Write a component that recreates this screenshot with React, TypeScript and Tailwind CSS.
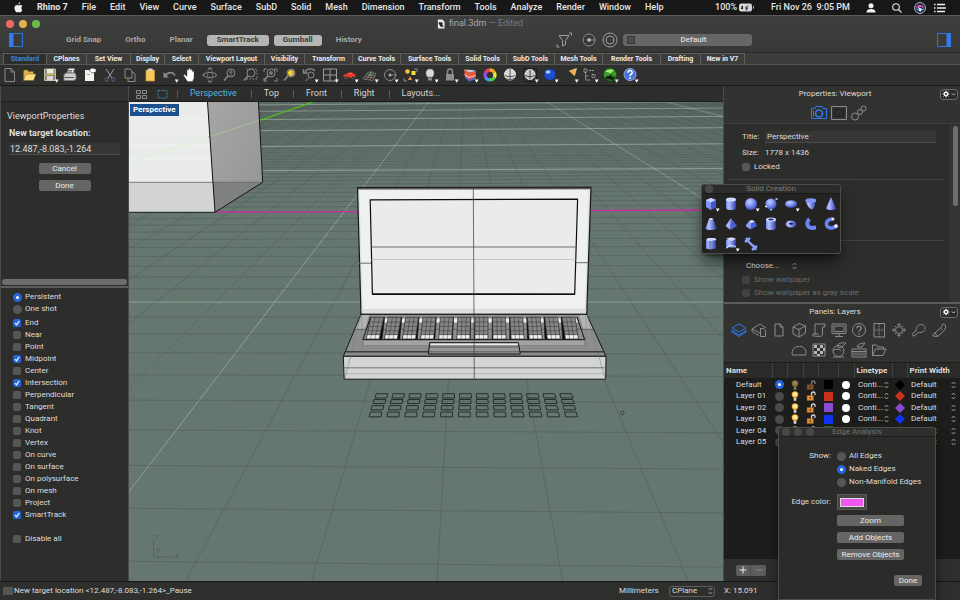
import React from "react";
import { clsx } from "clsx";

type CellProps = { children?: React.ReactNode; className?: string };

const Cell: React.FC<CellProps> = ({ children, className }) => (
  <svg viewBox="0 0 20 20" className={clsx("h-5 w-5 shrink-0", className)} fill="none" stroke="#8b8b8b" strokeWidth="1" aria-hidden="true">
    {children}
  </svg>
);

const Drop = () => <path d="M14.8 14.5h3.8l-1.900 3.200z" fill="#fff" stroke="none" />;

const Lens = () => (
  <>
    <circle cx="11" cy="8" r="4" />
    <path d="M8 11l-4 4.500" strokeWidth="1.600" />
  </>
);

const toolIcons: { name: string; art: React.ReactNode }[] = [
  { name: "New", art: <path d="M5 3.500h6l3.500 3.500v9.500H5zM11 3.500V7h3.500" /> },
  {
    name: "Open",
    art: (
      <g stroke="#7d5f1a" strokeWidth=".5">
        <path d="M3.500 15V6.500l1-1.500h3l1 1.500h5V9" fill="#e2b24c" />
        <path d="M3.500 15.500L6 9h10l-2.500 6.500z" fill="#ffdf86" />
      </g>
    ),
  },
  {
    name: "Save",
    art: (
      <>
        <path d="M4.500 4h11v11.500h-11z" fill="#8d8d7d" stroke="#b9b9a8" />
        <path d="M7 4h6.500v4.500H7z" fill="#ecebd9" stroke="none" />
        <path d="M7 11h6v4.500H7z" fill="#d9d9d9" stroke="none" />
        <path d="M5 9.500h10" stroke="#c8b63f" />
        <Drop />
      </>
    ),
  },
  {
    name: "Print",
    art: (
      <>
        <path d="M7 9l1.500-5.500h6L13 9z" fill="#fff" stroke="#888" />
        <path d="M4 9.500l2-1.500h9l1 2v4l-2 1.500H4z" fill="#cfcfcf" stroke="#777" />
        <path d="M5 12.500h9M8.500 5.500h4M8 7h4" stroke="#333" strokeWidth=".8" />
      </>
    ),
  },
  {
    name: "Notes",
    art: (
      <>
        <path d="M5 5h9v11H5z" fill="#f3f3ee" stroke="none" />
        <path d="M9 5l3-2 4 1v3l-4 1z" fill="#fff" stroke="#333" strokeWidth=".6" />
        <path d="M7 9.500h3" stroke="#888" strokeWidth=".7" />
      </>
    ),
  },
  {
    name: "Cut",
    art: (
      <>
        <path d="M6 4l6 9M14 4l-6 9" stroke="#9ba0a8" />
        <circle cx="6.700" cy="14.500" r="1.700" stroke="#54658f" />
        <circle cx="13.300" cy="14.500" r="1.700" stroke="#54658f" />
      </>
    ),
  },
  { name: "Copy", art: <path d="M5 4h5l2 2v7H5zM8 13v3.500h7V9l-2-2h-1" /> },
  {
    name: "Paste",
    art: (
      <>
        <path d="M6 5h8.500v11H6z" fill="#f5c75d" stroke="#d09b34" strokeWidth=".7" />
        <path d="M8 3.500h4.500V6H8z" fill="#d8d8d8" stroke="none" />
      </>
    ),
  },
  {
    name: "Undo",
    art: (
      <>
        <path d="M5 11c2-4 8-5 10-.5" strokeWidth="1.800" />
        <path d="M3.500 7v5.500h5.500z" fill="#8b8b8b" stroke="none" />
        <Drop />
      </>
    ),
  },
  {
    name: "Pan",
    art: (
      <path
        d="M7.500 16.500L3.800 10.800c-.5-1.200.9-1.700 1.700-.7L7 11.500V5.500c0-1.200 1.600-1.200 1.700 0V4.300c.1-1.300 1.700-1.300 1.800 0v.9c.2-1.200 1.700-1.100 1.800.1v1.400c.3-1 1.700-.9 1.700.3V13l-1.500 3.500z"
        fill="#fff"
        stroke="#444"
        strokeWidth=".4"
      />
    ),
  },
  {
    name: "Rotate view",
    art: (
      <>
        <ellipse cx="10" cy="10" rx="6.500" ry="2.500" />
        <ellipse cx="10" cy="10" rx="2.500" ry="6.500" stroke="#666" />
        <path d="M8 4l2-1.500L12 4M8 16l2 1.500 2-1.500M4 8.500L2.500 11" />
      </>
    ),
  },
  { name: "Zoom dynamic", art: <><Lens /><path d="M9 7h4M11 5v4M9.500 10h3" strokeWidth=".8" /></> },
  { name: "Zoom window", art: <><path d="M6 4h11v10H6" strokeDasharray="1.500 1.500" /><Lens /></> },
  { name: "Zoom extents", art: <><path d="M4 7V4h3M14 4h3v3M17 13v3h-3M7 16H4v-3" /><Lens /><circle cx="11" cy="8" r="2" fill="#777" stroke="none" /></> },
  { name: "Zoom selected", art: <><Lens /><circle cx="11" cy="8" r="3" fill="#f5d83d" stroke="none" /><path d="M11 5l3 3-2 2z" fill="#e9953a" stroke="none" /></> },
  { name: "Undo view", art: <><path d="M5 7c2-4 8-4 10-1M3.500 4v4h4" strokeWidth="1.300" /><circle cx="11" cy="10" r="3" /><path d="M9 12.500L5.500 16" /><Drop /></> },
  { name: "Viewports", art: <><path d="M3.500 4h13v12h-13zM10 4v12M3.500 10h13" stroke="#9b9b9b" /><Drop /></> },
  {
    name: "Car",
    art: (
      <>
        <path d="M3 11.500c0-2 2-2.500 4-2.700C8.500 7 12 6.500 13.500 8.500c2 .3 2.500 1.500 2 3.300l-4 1.200z" fill="#e23b2c" stroke="#8e1e15" strokeWidth=".5" />
        <path d="M8 8.800c1.500-1 3-1 4-.2z" fill="#f7c9c3" stroke="none" />
        <circle cx="6" cy="12.500" r="1.200" fill="#222" stroke="#999" strokeWidth=".4" />
        <circle cx="13" cy="12.500" r="1.200" fill="#222" stroke="#999" strokeWidth=".4" />
        <Drop />
      </>
    ),
  },
  {
    name: "Construction plane",
    art: (
      <>
        <path d="M3 14L8 7l8 1.500-3 7zM5 11.500l9 1.500M6.500 9.300l8.700 1.500M6 14.500L10.500 7.500M9.500 15L13.500 8" strokeWidth=".7" />
        <path d="M10 11l-3.500 2" stroke="#d44" />
        <path d="M10 11l1.500-5" stroke="#5b5" />
        <Drop />
      </>
    ),
  },
  { name: "Set view", art: <><circle cx="10" cy="10" r="5.500" /><path d="M10 10h7" strokeWidth=".8" /><circle cx="10" cy="10" r="1.500" fill="#aaa" stroke="none" /><Drop /></> },
  {
    name: "Object properties",
    art: (
      <>
        <path d="M4 13v3h3M14 4h3v3" />
        <circle cx="7.500" cy="6.500" r="2.300" fill="#f3c43a" stroke="none" />
        <path d="M11.500 6h4v4h-4z" fill="#f3e13a" stroke="none" />
        <path d="M8 15l2-4 2 4z" fill="#f09a3a" stroke="none" />
        <Drop />
      </>
    ),
  },
  {
    name: "Hide",
    art: (
      <>
        <path d="M7.500 12C5 9 5.500 4 10 4s5 5 2.500 8z" fill="#d9d9d9" stroke="#888" strokeWidth=".5" />
        <path d="M8 12.500h4v3H8z" fill="#8a8a8a" stroke="none" />
        <Drop />
      </>
    ),
  },
  { name: "Lock", art: <><path d="M7.500 9V6.500c0-3.300 5-3.300 5 0V9" strokeWidth="1.500" /><path d="M6 9h8v6.500H6z" fill="#8e8e8e" stroke="none" /><Drop /></> },
  {
    name: "Layers",
    art: (
      <>
        <path d="M4 4.500l5 3 7-1.500-.5 8-6.500 2-4-4z" fill="#e9563b" stroke="none" />
        <path d="M4 4.500l5 3 7-1.500-3-1z" fill="#c9cdd9" stroke="none" />
        <path d="M4.500 9.500l4.500 3 6.500-2" stroke="#fff" strokeWidth=".8" />
        <path d="M5 12l4 3.500 6.500-2" stroke="#3a68d8" strokeWidth="1.600" />
        <Drop />
      </>
    ),
  },
  {
    name: "Colors",
    art: (
      <g strokeWidth="3.300">
        <path d="M10 5a5 5 0 0 1 4.300 2.500" stroke="#f5a623" />
        <path d="M14.300 7.500a5 5 0 0 1 0 5" stroke="#f3e33a" />
        <path d="M14.300 12.500A5 5 0 0 1 10 15" stroke="#52c84a" />
        <path d="M10 15a5 5 0 0 1-4.300-2.500" stroke="#3f9bf0" />
        <path d="M5.700 12.500a5 5 0 0 1 0-5" stroke="#9a4ae0" />
        <path d="M5.700 7.500A5 5 0 0 1 10 5" stroke="#ee3f66" />
      </g>
    ),
  },
  { name: "Shade", art: <><circle cx="10" cy="9.500" r="5.500" fill="#d8d8d8" stroke="#eee" /><path d="M4.500 10.500c3 1.500 8 1.500 11 0M10 4v11M6 13.500c2 1.500 6 1.500 8 0" stroke="#555" /></> },
  {
    name: "Shade selected",
    art: (
      <>
        <path d="M3.500 3.500h13v13h-13z" stroke="#111" strokeDasharray="1 1" />
        <circle cx="10" cy="9.500" r="5" fill="#c8c8c8" stroke="#eee" />
        <path d="M5 10.500c3 1.500 7 1.500 10 0M10 4.500v10" stroke="#444" />
        <Drop />
      </>
    ),
  },
  { name: "Render", art: <><circle cx="10" cy="9.500" r="5.700" fill="#1c4fd0" stroke="#0d2a7c" strokeWidth=".5" /><ellipse cx="8" cy="7" rx="2.500" ry="1.800" fill="#a9c4ff" stroke="none" /><Drop /></> },
  { name: "Spotlight", art: <><path d="M9.500 6l7-2.500-2 7z" fill="#f4a83c" stroke="#fbe2a2" strokeWidth=".7" /><Drop /></> },
  { name: "Options", art: <><path d="M4 4h3v3H4zM9 5.500h5M5.500 7v8H10M5.500 11H9M12 9.500h3v3h-3z" strokeDasharray="2 .7" stroke="#a5a5a5" /><Drop /></> },
  {
    name: "Grasshopper",
    art: (
      <>
        <circle cx="10" cy="9.500" r="6.500" fill="#3d9a2c" stroke="#1e5516" />
        <path d="M5 7c3-3 7-3 9-1-2 0-3 1-3 3-2-2-4-2-6-2z" fill="#a4f07a" stroke="none" />
        <path d="M5 14c1-3 3-4 5-3l1-3 1 4 3-1-2 4z" fill="#10200c" stroke="none" />
        <Drop />
      </>
    ),
  },
  {
    name: "Help",
    art: (
      <>
        <circle cx="10" cy="9.500" r="6" fill="#4a74dc" stroke="#89a6ee" />
        <path d="M8 7.800c0-3 4.200-2.800 4.200-.3 0 1.700-2.100 1.700-2.100 3.500" stroke="#fff" strokeWidth="1.500" />
        <circle cx="10" cy="13" r=".9" fill="#fff" stroke="none" />
        <Drop />
      </>
    ),
  },
];

const menus = ["File", "Edit", "View", "Curve", "Surface", "SubD", "Solid", "Mesh", "Dimension", "Transform", "Tools", "Analyze", "Render", "Window", "Help"];

const toolTabs = [
  { label: "Standard", width: "w-11" },
  { label: "CPlanes", width: "w-10" },
  { label: "Set View", width: "w-11" },
  { label: "Display", width: "w-[34px]" },
  { label: "Select", width: "w-[34px]" },
  { label: "Viewport Layout", width: "w-[66px]" },
  { label: "Visibility", width: "w-10" },
  { label: "Transform", width: "w-12" },
  { label: "Curve Tools", width: "w-12" },
  { label: "Surface Tools", width: "w-[58px]" },
  { label: "Solid Tools", width: "w-12" },
  { label: "SubD Tools", width: "w-12" },
  { label: "Mesh Tools", width: "w-12" },
  { label: "Render Tools", width: "w-[58px]" },
  { label: "Drafting", width: "w-10" },
  { label: "New in V7", width: "w-11" },
];

const snaps = ["End", "Near", "Point", "Midpoint", "Center", "Intersection", "Perpendicular", "Tangent", "Quadrant", "Knot", "Vertex", "On curve", "On surface", "On polysurface", "On mesh", "Project", "SmartTrack"];
const activeSnaps = ["End", "Midpoint", "Intersection", "SmartTrack"];

const layers = [
  { name: "Default", color: "#000000" },
  { name: "Layer 01", color: "#c8321c" },
  { name: "Layer 02", color: "#8a4bd0" },
  { name: "Layer 03", color: "#1034f0" },
  { name: "Layer 04", color: "#2c6b1f" },
  { name: "Layer 05", color: "#2c6b1f" },
];

type OptionProps = { label: string; on?: boolean; disabled?: boolean; className?: string };

const CheckOption: React.FC<OptionProps> = ({ label, on, disabled, className }) => (
  <label className={clsx("flex h-3 items-center gap-1 whitespace-nowrap", disabled && "text-[#6b6b69]", className)}>
    <span className="relative h-2 w-2">
      <input
        type="checkbox"
        defaultChecked={on}
        disabled={disabled}
        className="peer block h-2 w-2 appearance-none rounded-[2px] bg-[#565655] checked:bg-[#2465dd] disabled:bg-[#414140]"
      />
      <svg viewBox="0 0 8 8" className="pointer-events-none absolute inset-0 hidden h-2 w-2 peer-checked:block" fill="none" stroke="#fff" strokeWidth="1.200">
        <path d="M2 4.200l1.500 1.600L6.200 2" />
      </svg>
    </span>
    {label}
  </label>
);

const RadioOption: React.FC<OptionProps & { group: string }> = ({ label, on, group, className }) => (
  <label className={clsx("flex h-3 items-center gap-[3px] whitespace-nowrap", className)}>
    <input type="radio" name={group} defaultChecked={on} className="h-[9px] w-[9px] appearance-none rounded-full bg-[#565655] checked:border-[3px] checked:border-[#2465dd] checked:bg-white" />
    {label}
  </label>
);

const PushButton: React.FC<{ children: React.ReactNode; className?: string }> = ({ children, className }) => (
  <button className={clsx("flex h-[11px] items-center justify-center rounded-[2px] bg-[#656564] leading-none text-[#ececec]", className)}>{children}</button>
);

const Steppers = () => (
  <svg viewBox="0 0 5 8" className="pointer-events-none h-2 w-[5px] shrink-0" fill="none" stroke="#a5a5a5" strokeWidth=".9">
    <path d="M.7 3l1.800-2 1.800 2M.7 5l1.800 2 1.800-2" />
  </svg>
);

const GearButton = () => (
  <button aria-label="Panel options" className="flex h-[11px] w-[18px] items-center justify-center gap-px rounded-[3px] border border-[#6a6a69] bg-[#2b2b2a]">
    <svg viewBox="0 0 8 8" className="h-2 w-2" stroke="#f0f0f0" fill="none">
      <circle cx="4" cy="4" r="1.700" strokeWidth="1.500" />
      <path d="M4 .6v1.400M4 6v1.400M.6 4H2M6 4h1.400M1.600 1.600l1 1M5.400 5.400l1 1M6.400 1.600l-1 1M2.600 5.400l-1 1" strokeWidth="1" />
    </svg>
    <svg viewBox="0 0 5 8" className="h-2 w-[5px]" stroke="#d0d0d0" fill="none">
      <path d="M1 3.500l1.500 1.500L4 3.500" />
    </svg>
  </button>
);

const MenuBar = () => (
  <header className="flex h-[15px] shrink-0 items-center bg-[#171717] px-3.5 text-[9px] font-medium text-[#e6e6e6]">
    <svg viewBox="0 0 12 14" className="h-[11px] w-[9px] shrink-0" fill="#f2f2f2">
      <path d="M8.300 0c.1 1.500-1.100 2.800-2.500 2.900C5.600 1.500 6.900.2 8.300 0zM11 10.300C10.300 12 9.200 13.500 8.200 13.500c-.8 0-1.200-.5-2.100-.5s-1.400.5-2.100.5C2.500 13.500.6 10.600.6 7.800.6 5.300 2.200 3.700 4 3.700c.9 0 1.600.5 2.200.5.600 0 1.500-.6 2.600-.6 1 0 1.900.5 2.400 1.300-2 1.200-1.700 4.300-.2 5.400z" />
    </svg>
    <nav className="ml-3.5 flex gap-3.5 whitespace-nowrap">
      <button className="font-bold">Rhino 7</button>
      {menus.map((menu) => (
        <button key={menu}>{menu}</button>
      ))}
    </nav>
    <div className="ml-auto flex items-center whitespace-nowrap">
      <span>100%</span>
      <svg viewBox="0 0 16 9" className="ml-0.5 h-[9px] w-4" fill="#d5d5d5">
        <rect x="0" y=".5" width="13" height="8" rx="2" />
        <path d="M14 3v3c1.300-.3 1.300-2.700 0-3z" />
        <path d="M3.500 3v3M2 4h2M2 5.500h2M9 3l-2.500 2h2L7 7.500" stroke="#171717" fill="none" strokeWidth="1" />
      </svg>
      <time className="ml-4 whitespace-pre">Fri Nov 26  9:05 PM</time>
      <svg viewBox="0 0 10 10" className="ml-4 h-2.5 w-2.5" fill="#f0f0f0">
        <circle cx="5" cy="2.800" r="2.500" />
        <path d="M.5 9.500C.5 6.500 3 6 5 6s4.500.5 4.500 3.500z" />
      </svg>
      <svg viewBox="0 0 10 10" className="ml-4 h-2.5 w-2.5" fill="none" stroke="#e6e6e6" strokeWidth="1.100">
        <circle cx="4" cy="4" r="3.300" />
        <path d="M6.500 6.500l3 3" />
      </svg>
      <svg viewBox="0 0 12 12" className="ml-3 h-3 w-3">
        <circle cx="6" cy="6" r="5.500" fill="#2b2b52" stroke="#c9cde0" strokeWidth=".8" />
        <path d="M1.500 6c2-4 7-4 9 0-3-1.500-6-1.500-9 0z" fill="#e05aa0" />
        <path d="M1.500 6c2 4 7 4 9 0-3 2-6 2-9 0z" fill="#41b8e8" />
        <path d="M4 5l4 2-2 3z" fill="#fff" />
      </svg>
      <svg viewBox="0 0 12 10" className="ml-2 h-2.5 w-3" stroke="#f0f0f0" strokeWidth="1.400">
        <path d="M0 1.500h1.500M3 1.500h8M0 5h1.500M3 5h9M0 8.500h1.500M3 8.500h8" />
      </svg>
    </div>
  </header>
);

const SidebarIcon: React.FC<{ flip?: boolean }> = ({ flip }) => (
  <svg viewBox="0 0 14 14" className={clsx("h-3.5 w-3.5 shrink-0", flip && "rotate-180")} fill="none" stroke="#2f76e8">
    <path d="M.5 .5h13v13H.5z" />
    <path d="M0 0h4.500v14H0z" fill="#3478f0" stroke="none" />
  </svg>
);

const TitleBar = () => (
  <div className="shrink-0 border-t border-[#5a5a59] bg-linear-to-b from-[#404040] to-[#373736]">
    <div className="relative flex h-[15px] items-center gap-[5px] px-1.5">
      <button aria-label="Close" className="h-2 w-2 rounded-full bg-[#ee6a5f]" />
      <button aria-label="Minimise" className="h-2 w-2 rounded-full bg-[#e0b44b]" />
      <button aria-label="Full screen" className="h-2 w-2 rounded-full bg-[#6cbb4a]" />
      <h1 className="pointer-events-none absolute inset-x-0 flex items-center justify-center gap-1 text-[9px] text-[#a9a9a8]">
        <svg viewBox="0 0 9 10" className="h-2.5 w-2">
          <path d="M1 0h5l2.500 2.500V10H1z" fill="#e8e8e8" />
          <path d="M1.500 4c1-2 3 0 5-1l-.5 3 2 2H4L3 6z" fill="#222" />
        </svg>
        <span>
          final.3dm <span className="text-[#7b7b7a]">— Edited</span>
        </span>
      </h1>
    </div>
    <div className="flex h-[21px] items-center px-[9px] pb-[3px] text-[8px] font-bold text-[#a8a8a7]">
      <SidebarIcon />
      <div className="ml-[43px] flex items-center">
        <button className="mr-6">Grid Snap</button>
        <button className="mr-6">Ortho</button>
        <button className="mr-3.5">Planar</button>
        <button className="mr-[5px] flex h-[11px] w-[62px] items-center justify-center rounded-[3px] bg-[#b5b5b4] text-[#3c3c3b]">SmartTrack</button>
        <button className="mr-3.5 flex h-[11px] w-12 items-center justify-center rounded-[3px] bg-[#b5b5b4] text-[#3c3c3b]">Gumball</button>
        <button>History</button>
      </div>
      <div className="ml-auto flex items-center gap-[5px]">
        <svg viewBox="0 0 16 16" className="mr-1 h-4 w-4" fill="none" stroke="#a0a09f">
          <path d="M3 3.500h10L9.500 8.500v4l-3 1.500V8.500zM1 12v3h2.500M13 1h2.500v2.500" />
        </svg>
        <svg viewBox="0 0 16 16" className="h-4 w-4" fill="none" stroke="#8d8d8c">
          <circle cx="8" cy="8" r="6" />
          <path d="M8 8h7" />
          <circle cx="8" cy="8" r="1.800" fill="#c5c5c5" stroke="none" />
        </svg>
        <svg viewBox="0 0 16 16" className="h-4 w-4" fill="none" stroke="#a0a09f">
          <circle cx="8" cy="8" r="7" />
          <circle cx="8" cy="8" r="4" />
        </svg>
        <button className="flex h-3 w-[129px] items-center rounded-[3px] bg-[#666665] px-1 font-medium text-[#dededd]">
          <span className="h-2 w-2 border border-[#383837] bg-[#4c4c4b]" />
          <span className="flex-1 pl-1">Default</span>
        </button>
      </div>
      <div className="ml-[185px]">
        <SidebarIcon flip />
      </div>
    </div>
  </div>
);

const ToolTabs = () => (
  <div className="shrink-0 border-t border-[#2a2a29] bg-[#2f2f2e]">
    <div role="tablist" className="flex h-3 border-b border-[#565655] bg-[#3c3c3b] pl-[3px] text-[7px] font-bold whitespace-nowrap text-[#ececeb]">
      {toolTabs.map((tab, i) => (
        <button
          key={tab.label}
          role="tab"
          aria-selected={i === 0}
          className={clsx("flex items-center justify-center border-t border-r border-[#5f5f5e]", tab.width, i === 0 && "border-l bg-[#2d2d2c] text-[#3a80f2]")}
        >
          {tab.label}
        </button>
      ))}
    </div>
    <div className="flex h-[21px] border-b border-[#181818]">
      {toolIcons.map((tool) => (
        <button key={tool.name} aria-label={tool.name}>
          <Cell>{tool.art}</Cell>
        </button>
      ))}
    </div>
  </div>
);

const LeftPanel = () => (
  <aside className="flex w-[129px] shrink-0 flex-col border-x border-[#4b4b4a] bg-[#2d2d2c] text-[8px] text-[#dededd]">
    <div className="h-4 shrink-0 border-b border-[#1c1c1b] bg-[#313130]" />
    <form className="flex h-[177px] flex-col items-center px-1.5 pt-2">
      <h2 className="w-full text-[9px] leading-3">ViewportProperties</h2>
      <label htmlFor="target" className="mt-[5px] w-full pl-0.5 text-[9px] leading-3 font-bold">
        New target location:
      </label>
      <input id="target" defaultValue="12.487,-8.083,-1.264" className="mt-1 h-3 w-[111px] border-b border-[#4a4a49] bg-[#363635] px-px text-[9px]" />
      <PushButton className="mt-2 w-[52px]">Cancel</PushButton>
      <PushButton className="mt-1.5 w-[52px]">Done</PushButton>
    </form>
    <div className="border-b-2 border-[#5c5c5b] px-px pb-px">
      <div className="h-1.5 rounded-full bg-[#6d6d6c]" />
    </div>
    <fieldset className="flex flex-col pt-[3px] pl-3">
      <RadioOption group="snap" label="Persistent" on />
      <RadioOption group="snap" label="One shot" className="mb-0.5" />
      {snaps.map((snap) => (
        <CheckOption key={snap} label={snap} on={activeSnaps.includes(snap)} />
      ))}
      <CheckOption label="Disable all" className="mt-3" />
    </fieldset>
  </aside>
);

// Construction grid: lines leave one vanishing point, cross lines close up towards the horizon.
const VANISH = { x: 467, y: 52 };
const HORIZON = 54;

const GroundGrid = () => {
  const rays: React.ReactNode[] = [];
  for (let i = -36; i <= 40; i++) {
    if (i === -10) continue;
    const slope = -0.769 + 0.2375 * i;
    const major = i % 10 === 0;
    rays.push(
      <path
        key={`r${i}`}
        d={`M${VANISH.x + slope * 40} ${VANISH.y + 40}L${VANISH.x + slope * 540} ${VANISH.y + 540}`}
        stroke={major ? "#a9b8b0" : "#4f5953"}
        strokeOpacity={major ? 0.8 : 0.6}
      />
    );
  }
  const cross: React.ReactNode[] = [];
  for (let k = -9; k <= 70; k++) {
    if (k === 10) continue;
    const y = HORIZON + 1 / (0.00403 + 0.00023 * k);
    const tilt = (y - 300) * 0.011;
    const major = k % 10 === 0;
    cross.push(
      <path
        key={`c${k}`}
        d={`M129 ${y - tilt}L723 ${y + tilt}`}
        stroke={major ? "#a9b8b0" : "#4f5953"}
        strokeOpacity={major ? 0.75 : k > 25 ? 0.35 : 0.6}
      />
    );
  }
  return (
    <g fill="none" strokeWidth=".8">
      {rays}
      {cross}
    </g>
  );
};

const Keyboard = () => {
  const keys: React.ReactNode[] = [];
  for (let c = 0; c < 12; c++) {
    const tx = 370.7 + c * 17.4;
    const bx = 366.3 + c * 18.1;
    const edge = Math.abs(c - 5.5) / 5.5;
    const dir = c < 6 ? 1 : -1;
    const near = c < 6 ? 1 : 0;
    const at = (t: number, u: number) => `${tx + (bx - tx) * t + 13 * u} ${317.3 + 21.7 * t}`;
    keys.push(
      <g key={c} strokeWidth=".6" stroke="#1c1c1c">
        <path d={`M${at(0, near)}L${at(0, near + 0.08 * edge * dir)}L${at(1, near + 0.22 * edge * dir)}L${at(1, near)}z`} fill="#0c0c0c" />
        <path d={`M${at(0, 0)}L${at(0, 1)}L${at(1, 1)}L${at(1, 0)}z`} fill="#868686" />
        <path d={`M${at(0.82, 0.04)}L${at(0.82, 0.96)}L${at(0.98, 0.96)}L${at(0.98, 0.04)}z`} fill="#eceeec" stroke="none" />
        <path
          d={`M${at(0, 0.33)}L${at(1, 0.33)}M${at(0, 0.66)}L${at(1, 0.66)}M${at(0.22, 0)}L${at(0.22, 1)}M${at(0.42, 0)}L${at(0.42, 1)}M${at(0.62, 0)}L${at(0.62, 1)}M${at(0.8, 0)}L${at(0.8, 1)}`}
          strokeWidth=".4"
        />
      </g>
    );
  }
  return <>{keys}</>;
};

const KeyCurves = () => {
  const rows = [
    { y: 393.7, h: 4.3, from: 375, to: 561 },
    { y: 399.5, h: 4, from: 373, to: 562.5 },
    { y: 405.6, h: 4.2, from: 371, to: 564 },
    { y: 412, h: 4.8, from: 369, to: 565.7 },
  ];
  return (
    <g fill="none" stroke="#18201c" strokeWidth=".8">
      {rows.map((row) =>
        Array.from({ length: 12 }, (_, c) => {
          const x = row.from + ((row.to - row.from) * c) / 11;
          const skew = (5.5 - c) * 0.22;
          return <path key={`${row.y}-${c}`} d={`M${x + skew} ${row.y}h11.500L${x + 12} ${row.y + row.h}h-12z`} />;
        })
      )}
    </g>
  );
};

const Scene = () => (
  <svg viewBox="129 102 594 479" preserveAspectRatio="xMidYMid slice" className="absolute inset-0 h-full w-full">
    <defs>
      <linearGradient id="ground" x1="0" y1="0" x2="0" y2="1">
        <stop offset="0" stopColor="#5c6c66" />
        <stop offset=".2" stopColor="#65776f" />
        <stop offset="1" stopColor="#65776f" />
      </linearGradient>
      <linearGradient id="side" x1="0" y1="0" x2="1" y2="1">
        <stop offset="0" stopColor="#a6a6a6" />
        <stop offset="1" stopColor="#949494" />
      </linearGradient>
    </defs>
    <path d="M129 102h594v479H129z" fill="url(#ground)" />
    <GroundGrid />
    <path d="M214 212.200L723 210" stroke="#cc2aa6" strokeWidth="1.300" />
    <path d="M258 121L313 102" stroke="#52c41f" strokeWidth="1.300" />

    <g strokeLinejoin="round">
      <path d="M129 102h78.500L215 212.300H129z" fill="#eaebeb" />
      <path d="M129 182.300h83.800l2.200 30H129z" fill="#d2d3d3" />
      <path d="M207.500 102H258.500l4.200 80L215 212.300z" fill="url(#side)" />
      <path d="M212.800 182.300h49.900L215 212.300z" fill="#808181" />
      <path d="M129 128h80M129 119h79M129 145h81M129 159h82" stroke="#fff" strokeOpacity=".35" />
      <path d="M129 162.500L208 137" stroke="#d9f7cf" />
      <path d="M208 137L258 121" stroke="#a5c09b" />
      <path d="M129 182.300h133" stroke="#666" strokeWidth=".8" />
      <path d="M129 212.300h86L207.500 102M215 212.300l47.700-30L258.500 102" fill="none" stroke="#151515" />
    </g>

    <g strokeLinejoin="round" fill="none">
      <path d="M357.500 187.500L591 187.300L586.700 314.300H361z" fill="#dfe1e0" stroke="#161616" strokeWidth="1.200" />
      <path d="M359.500 190L588.500 189.700L585 311H363z" fill="#eff1f0" stroke="none" />
      <path d="M358 188.800L590.500 188.500" stroke="#5a5a5a" strokeWidth="1.600" />
      <path d="M370.200 199.800L577.600 199.200L574.700 294.300L372.400 294z" fill="#eaeceb" stroke="#0d0d0d" strokeWidth="1.200" />
      <path d="M372 294.200h203" stroke="#0d0d0d" strokeWidth="1.500" />
      <path d="M371.500 247h204M359 263.200h12M576 262.700h12.500" stroke="#6c6e6d" />
      <path d="M371.500 259.500h204M361 310h226" stroke="#bcbebd" strokeWidth=".8" />

      <path d="M361 314.300H586.700L606 356.300H343.300z" fill="#8c8d8d" stroke="#161616" />
      <path d="M361.500 315h7.500l-4 14h-9.500zM579 315h7.500l6 14h-9z" fill="#b3b4b4" stroke="none" />
      <path d="M343.300 356.300H606L605.700 379.200H344.200z" fill="#d3d5d4" stroke="#161616" />
      <path d="M344 367.800h262" stroke="#5f6160" strokeWidth=".8" />
      <path d="M344.300 373.700h261" stroke="#a5a7a6" strokeWidth=".8" />
      <path d="M361 315L345 378M587 315L605 378M362 316v32M586 316v30" stroke="#77797a" strokeOpacity=".7" strokeWidth=".7" />
      <path d="M345.700 351.800H604" stroke="#242424" />
      <path d="M355 329.300h238" stroke="#565656" strokeWidth=".7" />
      <path d="M371.500 318.500h205l1.500 4h-208z" fill="#f1f3f2" stroke="none" />
      <path d="M363.300 339.700h221.400v5.800H363.300z" fill="#a2a3a3" stroke="#777" strokeWidth=".6" />
      <Keyboard />
      <path d="M370.500 317L363 339.700" stroke="#111" />
      <path d="M363 339.700H584.700L577 317" stroke="#111" />
      <path d="M429.700 342.700h88.600l2 11.300h-92z" fill="#969797" stroke="#111" />
      <path d="M430.500 344.200h87.500" stroke="#eee" strokeWidth="1.400" />
      <path d="M429 347h90M345.700 351.800H604" stroke="#333" strokeWidth=".6" />
      <path d="M473.300 187.500L474.300 379" stroke="#3b3b3b" strokeWidth=".9" strokeOpacity=".8" />
    </g>

    <KeyCurves />
    <circle cx="622.500" cy="413" r="1.600" fill="#7f8f88" stroke="#1c1c1c" strokeWidth=".7" />
    <path d="M153.500 539v18h20" stroke="#53615b" fill="none" strokeWidth=".8" />
    <g fill="#515d57" className="text-[8px]">
      <text x="155" y="539">z</text>
      <text x="156" y="552">y</text>
      <text x="175" y="558">x</text>
    </g>
  </svg>
);

const views = ["Perspective", "Top", "Front", "Right", "Layouts..."];

const Viewport = () => (
  <main className="flex min-w-0 flex-1 flex-col">
    <div className="flex h-4 shrink-0 items-center border-b border-[#1c1c1b] bg-[#2d2d2c] pl-[7px] text-[9px] whitespace-nowrap text-[#d5d5d4]">
      <svg viewBox="0 0 11 10" className="h-2.5 w-[11px]" fill="none" stroke="#8b8b8a">
        <path d="M.5 1.500h4v3h-4zM6.500 1.500h4v3h-4zM.5 6.500h4v3h-4zM6.500 6.500h4v3h-4z" />
      </svg>
      <svg viewBox="0 0 11 10" className="ml-2.5 h-2.5 w-[11px]" fill="none" stroke="#3c7fa0">
        <path d="M1 1.500h9v7.500H1z" strokeDasharray="2 .8" />
      </svg>
      <div role="tablist" className="ml-[9px] flex items-center">
        {views.map((view, i) => (
          <button key={view} role="tab" aria-selected={i === 0} className={clsx("flex items-center gap-3 pr-3.5", i === 0 && "text-[#52b6dc]")}>
            <span className="h-2 w-px bg-[#5a5a59]" />
            {view}
          </button>
        ))}
      </div>
    </div>
    <div className="relative flex-1 overflow-hidden">
      <Scene />
      <div className="absolute top-0.5 left-px bg-[#1d4f8f] px-[3px] text-[8px] leading-3 font-bold text-white">Perspective</div>
    </div>
  </main>
);

const panelIcons: { name: string; art: React.ReactNode }[] = [
  { name: "Layers", art: <g stroke="#2f76e8"><path d="M3 8l7-4 7 4-7 4z" /><path d="M3 10.500V12l7 4.500L17 12v-1.500L10 15z" /></g> },
  { name: "Layer states", art: <path d="M11 13L3 9l8-5 6 4M3 9v2.500l7 4M11.500 8.500h3l2 2v6h-5z" /> },
  { name: "Document", art: <path d="M6 4h5l3 3v9H6zM11 4v3h3" /> },
  { name: "Block", art: <path d="M4 7l6-3.500L16.500 6v7l-6.500 4-6-3zM4 7l6 2.500L16.500 6M10 9.500V17" /> },
  { name: "Notes", art: <path d="M6 4h10v3h-2.500v7c0 3-3 2.500-9.500 2v-2h6M6 4v10" /> },
  { name: "Display", art: <><path d="M3 4h14v9.500H3zM6 16.500h8M10 13.500v3" /><path d="M5 6h10v5.500H5z" /></> },
  { name: "Help", art: <><circle cx="10" cy="10" r="6.500" /><path d="M7.800 8.500c0-3 4.500-3 4.500-.2 0 1.500-2.200 1.500-2.200 3.400M10 13v1.500" strokeWidth="1.300" /></> },
  { name: "Named views", art: <><path d="M5 3.500h10.500v13.500H5z" /><path d="M10 3.500V17M5 10h10.500" strokeDasharray="1.500 1" /></> },
  { name: "Sun", art: <><circle cx="10" cy="10" r="3.500" /><path d="M8.500 5L10 3.500 11.500 5zM8.500 15l1.500 1.500 1.500-1.500zM5 8.500L3.500 10 5 11.500zM15 8.500l1.500 1.500-1.500 1.500zM6 6l1 1M14 6l-1 1M6 14l1-1M14 14l-1-1" /></> },
  { name: "Light", art: <path d="M4 16c-1-2 0-3.500 3-5 0-4 2-7 5.500-6.500 4 .5 4.500 5 2 7-3 2-5 0-7 2.500-1 1.500-2 2-3.500 2z" /> },
  { name: "Tube", art: <path d="M14 4c2 0 3 1.500 2.500 4-1 3-5 6-8 8.500L4 16c0-2 .5-2.500 2-3l5.500-5zM11.500 8l2 2M6 13l2.500 3" /> },
  { name: "Ground plane", art: <path d="M3.500 15c-2-5 3-9 7-8.500 4-.5 8 4 6 8.500z" /> },
  { name: "Textures", art: <><path d="M4 4h12v12H4z" /><path d="M5 5h3v3H5zM11 5h3v3h-3zM8 8h3v3H8zM5 11h3v3H5zM11 11h3v3h-3zM14 8h2v3h-2zM8 14h3v2H8z" fill="#b5b5b4" stroke="none" /></> },
  { name: "Materials", art: <><circle cx="9.500" cy="11" r="5.500" /><path d="M4.500 10c3-1.500 7-1 8 1M8 6c1-3 5-3.500 9-3l-4 4-3 .5zM4 17h11" /></> },
  { name: "Libraries", art: <><path d="M3 9h14v8H3zM3 11.500h14M8 7c1-3 4-4 8-4l-3 4z" /><path d="M4 14h12M5 12v4M7 12v4M9 12v4M11 12v4M13 12v4M15 12v4" strokeWidth=".6" /></> },
  { name: "Folder", art: <path d="M3.500 15.500V5h4l1.500 2h5.500v2M3.500 15.500L6.500 9H17l-3 6.500z" /> },
];

const Bulb: React.FC<{ dim?: boolean }> = ({ dim }) => (
  <svg viewBox="0 0 8 10" className={clsx("mx-auto block h-2.5 w-2", dim && "opacity-50")}>
    <path d="M2.500 6.800C-.5 4 .5 .2 4 .2s4.500 3.800 1.500 6.600z" fill="#f7b733" />
    <ellipse cx="4" cy="3.200" rx="2" ry="2" fill="#fff0b0" />
    <path d="M2.700 6.800h2.600V9.800H2.700z" fill="#d8d4c8" />
  </svg>
);

const Padlock: React.FC<{ dim?: boolean }> = ({ dim }) => (
  <svg viewBox="0 0 10 10" className={clsx("mx-auto block h-2.5 w-2.5", dim && "opacity-50")} fill="none">
    <path d="M5.500 5V2.500c0-2 3.500-2 3.500 0V4" stroke="#d8d8d8" strokeWidth="1.300" />
    <path d="M1 4.500h6.500v5H1z" fill="#e0913a" stroke="#8a5318" strokeWidth=".5" />
    <path d="M4.200 6v2" stroke="#5a3208" />
  </svg>
);

const TinySelect: React.FC<{ label: string; value: string; className?: string }> = ({ label, value, className }) => (
  <span className="flex items-center">
    <select aria-label={label} className={clsx("h-2.5 appearance-none leading-none", className)} defaultValue={value}>
      <option>{value}</option>
    </select>
    <Steppers />
  </span>
);

const LayersPanel = () => (
  <section className="flex min-h-0 flex-1 flex-col">
    <div className="bg-[#323231] pb-0.5">
      <div className="flex h-4 items-center pr-0.5">
        <h2 className="flex-1 pl-1.5 text-center">Panels: Layers</h2>
        <GearButton />
      </div>
      <div className="mx-auto flex flex-wrap justify-center pr-1.5">
        {panelIcons.map((icon) => (
          <button key={icon.name} aria-label={icon.name}>
            <Cell>{icon.art}</Cell>
          </button>
        ))}
      </div>
    </div>
    <div className="min-h-0 flex-1 overflow-hidden bg-[#1d1d1c]">
      <table className="w-full table-fixed border-collapse">
        <colgroup>
          <col className="w-12" />
          <col className="w-[15px]" />
          <col className="w-4" />
          <col className="w-[15px]" />
          <col className="w-5" />
          <col className="w-4" />
          <col className="w-[38px]" />
          <col className="w-[15px]" />
          <col />
        </colgroup>
        <thead className="bg-[#2a2a29]">
          <tr className="h-4 text-left [&>th]:border-y [&>th]:border-y-[#1c1c1b] [&>th+th]:border-l [&>th+th]:border-l-[#3f3f3e] [&>th]:p-0 [&>th]:font-bold [&>th]:whitespace-nowrap">
            <th><span className="pl-0.5">Name</span></th>
            <th aria-label="Current" />
            <th aria-label="On" />
            <th aria-label="Lock" />
            <th aria-label="Color" />
            <th aria-label="Material" />
            <th><span className="pl-0.5">Linetype</span></th>
            <th aria-label="Print color" />
            <th><span className="pl-0.5">Print Width</span></th>
          </tr>
        </thead>
        <tbody>
          {layers.map((layer, i) => (
            <tr key={layer.name} className="h-[11px] odd:h-3 [&>td]:p-0">
              <td><span className="block pl-3 leading-none whitespace-nowrap">{layer.name}</span></td>
              <td>
                <input
                  type="radio"
                  name="current-layer"
                  aria-label={`Make ${layer.name} current`}
                  defaultChecked={i === 0}
                  className="mx-auto block h-[9px] w-[9px] appearance-none rounded-full bg-[#4a4a49] checked:border-[3px] checked:border-[#2465dd] checked:bg-white"
                />
              </td>
              <td><Bulb dim={i === 0} /></td>
              <td><Padlock dim={i === 0} /></td>
              <td><span className="mx-auto block h-[9px] w-[9px]" style={{ backgroundColor: layer.color }} /></td>
              <td><span className="mx-auto block h-2 w-2 rounded-full bg-white" /></td>
              <td><TinySelect label="Linetype" value="Conti..." className="ml-1 w-[26px]" /></td>
              <td>
                <svg viewBox="0 0 10 10" className="mx-auto block h-2.5 w-2.5">
                  <path d="M5 0l5 5-5 5-5-5z" fill={layer.color} />
                </svg>
              </td>
              <td><TinySelect label="Print width" value="Default" className="ml-1 w-10" /></td>
            </tr>
          ))}
        </tbody>
      </table>
    </div>
    <div className="flex h-[22px] shrink-0 items-center bg-[#2f2f2e] pl-3">
      <button aria-label="Add layer" className="flex h-[11px] w-[15px] items-center justify-center rounded-l-[2px] border-r border-[#4a4a49] bg-[#5d5d5c]">
        <svg viewBox="0 0 8 8" className="h-2 w-2" stroke="#eee"><path d="M4 .5v7M.5 4h7" /></svg>
      </button>
      <button aria-label="Remove layer" className="flex h-[11px] w-[15px] items-center justify-center rounded-r-[2px] bg-[#5d5d5c]">
        <svg viewBox="0 0 8 8" className="h-2 w-2" stroke="#8b8b8a"><path d="M.5 4h7" /></svg>
      </button>
    </div>
  </section>
);

const RightPanel = () => (
  <aside className="flex w-[237px] shrink-0 flex-col border-l border-[#4b4b4a] bg-[#2d2d2c] text-[8px] text-[#dededd]">
    <section className="flex h-[218px] shrink-0 flex-col border-b-2 border-[#5c5c5b]">
      <div className="flex h-4 shrink-0 items-center bg-[#323231] pr-0.5">
        <h2 className="flex-1 pl-1.5 text-center">Properties: Viewport</h2>
        <GearButton />
      </div>
      <div className="flex h-[22px] shrink-0 justify-center border-b border-[#3d3d3c] bg-[#323231] pr-1.5">
        <button aria-label="Viewport">
          <Cell>
            <g stroke="#2f76e8">
              <path d="M2.500 5.500H6l1-2h6l1 2h3.500v10h-15z" />
              <circle cx="10" cy="10.500" r="3.500" strokeWidth="1.700" />
              <path d="M4.500 7.500v6" />
            </g>
          </Cell>
        </button>
        <button aria-label="Frame">
          <Cell>
            <path d="M2.500 3.500h15v13h-15z" />
            <path d="M5.500 6.500h9v7h-9z" stroke="#1d1d1c" fill="#2d2d2c" />
          </Cell>
        </button>
        <button aria-label="Links">
          <Cell>
            <circle cx="6" cy="13.500" r="3.500" />
            <circle cx="11" cy="9" r="2.500" />
            <circle cx="14.500" cy="5.500" r="2.500" />
          </Cell>
        </button>
      </div>
      <div className="flex min-h-0 flex-1">
        <div className="min-w-0 flex-1 pt-[7px] pl-1">
          <div className="flex h-3 items-center px-3.5">
            <label htmlFor="title" className="w-[23px]">Title:</label>
            <input id="title" defaultValue="Perspective" className="h-3 min-w-0 flex-1 border-b border-[#4a4a49] bg-[#363635] px-0.5" />
          </div>
          <p className="mt-1 flex h-3 items-center pl-3.5">
            <span className="w-[23px]">Size:</span>1778 x 1436
          </p>
          <CheckOption label="Locked" className="mt-0.5 ml-3.5" />
          <hr className="mt-1.5 mr-1.5 border-[#424241]" />
          <hr className="mt-[60px] mr-1.5 border-[#424241]" />
          <div className="mt-[19px] flex h-3 items-center pl-[18px]">
            <TinySelect label="Wallpaper file" value="Choose..." className="w-[46px]" />
          </div>
          <CheckOption label="Show wallpaper" disabled className="mt-0.5 ml-3.5" />
          <CheckOption label="Show wallpaper as gray scale" disabled className="mt-px ml-3.5" />
        </div>
        <div className="w-2.5 border-l border-[#3a3a39] bg-[#333332] px-0.5 pt-0.5">
          <div className="h-20 rounded-full bg-[#6d6d6c]" />
        </div>
      </div>
    </section>
    <LayersPanel />
  </aside>
);

const SOLID = "#6c83f2";
const solids: { name: string; drop?: boolean; art: React.ReactNode }[] = [
  { name: "Box", drop: true, art: <><path d="M5 6l5-2 5 2v7l-5 3-5-3z" fill="#8296f5" /><path d="M5 6l5-2 5 2-5 2.500z" fill="#c9d2ff" /><path d="M10 8.500L15 6v7l-5 3z" fill="#4256cf" /></> },
  { name: "Cylinder", art: <><path d="M5 5.500v9c2 2 8 2 10 0v-9z" fill="url(#tube)" /><ellipse cx="10" cy="5.500" rx="5" ry="2" fill="#d0d8ff" /></> },
  { name: "Sphere", drop: true, art: <circle cx="10" cy="10" r="6" fill="url(#ball)" /> },
  { name: "Ellipsoid", art: <><circle cx="10" cy="10" r="5.500" fill="url(#ball)" /><path d="M4 12.500h2M14.500 5h2M10 15v1.500" stroke="#dfe4ff" strokeWidth="1.500" /></> },
  { name: "Paraboloid", drop: true, art: <ellipse cx="10" cy="10" rx="6" ry="3.800" fill="url(#ball)" /> },
  { name: "Truncated", art: <><path d="M4.500 6c1 5 3 8 6 9.500 3-1 4-5 4.500-10z" fill="url(#tube)" /><ellipse cx="9.800" cy="6.500" rx="5.300" ry="2.300" fill="#8496f2" /></> },
  { name: "Cone", art: <path d="M10 3l5 11.500c-2 2-8 2-10 0z" fill="url(#tube)" /> },
  { name: "Truncated cone", art: <><path d="M8 5l-3.500 9.500c2 2 9 2 11 0L12 5z" fill="url(#tube)" /><ellipse cx="10" cy="5" rx="2" ry="1" fill="#d0d8ff" /></> },
  { name: "Pyramid", art: <><path d="M10 4L4.500 12l5 4z" fill="#a3b1fa" /><path d="M10 4l6 8-6.500 4z" fill="#4a60dd" /></> },
  { name: "Truncated pyramid", art: <><path d="M8 7L4.500 12l5 3.500 1-6z" fill="#8c9ef8" /><path d="M8 7l3-1 3 1.500-3.500 2z" fill="#dbe1ff" /><path d="M14 7.500l2 4.500-6.500 3.500 1-6z" fill="#4a60dd" /></> },
  { name: "Tube", art: <><path d="M5 5.500v9c2 2 8 2 10 0v-9z" fill="url(#tube)" /><ellipse cx="10" cy="5.500" rx="5" ry="2" fill="#d0d8ff" /><ellipse cx="10" cy="5.500" rx="2.800" ry="1" fill="#26307a" /></> },
  { name: "Torus", art: <><ellipse cx="10" cy="10" rx="5.500" ry="3.500" fill="url(#tube)" /><ellipse cx="10" cy="9.700" rx="2" ry="1" fill="#161b4a" /></> },
  { name: "Pipe", art: <path d="M8.500 5c-4 3.500-2.500 9 2.500 9l4-.5" fill="none" stroke={SOLID} strokeWidth="3.800" /> },
  { name: "Pipe round", art: <><path d="M10.500 5c-7 1.500-6.500 9.500.5 9l4-1.500" fill="none" stroke={SOLID} strokeWidth="3.500" strokeLinecap="round" /><circle cx="15" cy="12" r="1.800" fill="#fff" /><circle cx="12" cy="5" r="1.500" fill="#dfe4ff" /></> },
  { name: "Extrude", art: <><path d="M5 6v8.500l4 1 6-1V6z" fill="url(#tube)" /><path d="M5 6l2-2h7l1.500 2-6 1z" fill="#d0d8ff" /><path d="M9 7v8" stroke="#26307a" strokeWidth=".7" /></> },
  { name: "Extrude surface", drop: true, art: <><path d="M5 6v9l3-2 4 1 3-1V6z" fill="url(#tube)" /><path d="M5 5c3-2 8-2 10 0l-4 2z" fill="#d0d8ff" /><path d="M6 14c3-3 5-3 9-1" fill="none" stroke="#eef" /></> },
  { name: "Boss", art: <g stroke="#8ba0ff" strokeWidth="2.400"><path d="M4 8l5-4M5 4l3 4M8 8l5 5M11 16l5-4M12 11l3 5" /></g> },
];

const SolidPalette = () => (
  <div className="absolute top-[184px] right-[119px] h-[70px] w-[140px] overflow-hidden rounded-[3px] border border-[#4c4c4b] bg-[#232322] shadow-lg shadow-black/60">
    <div className="relative flex h-[9px] items-center justify-center border-b border-[#191918] bg-[#2c2c2b] text-[8px] text-[#7d7d7c]">
      <button aria-label="Close palette" className="absolute left-[3px] h-2 w-2 rounded-full bg-[#484847]" />
      Solid Creation
    </div>
    <div className="-mx-px flex flex-wrap">
      <svg className="absolute h-0 w-0">
        <defs>
          <linearGradient id="tube">
            <stop offset="0" stopColor="#7288f2" />
            <stop offset=".3" stopColor="#b5c0ff" />
            <stop offset="1" stopColor="#2a3cb0" />
          </linearGradient>
          <radialGradient id="ball" cx=".38" cy=".32" r=".8">
            <stop offset="0" stopColor="#c8d1ff" />
            <stop offset=".5" stopColor="#7388f0" />
            <stop offset="1" stopColor="#2c3ca6" />
          </radialGradient>
        </defs>
      </svg>
      {solids.map((solid) => (
        <button key={solid.name} aria-label={solid.name}>
          <Cell>
            <g stroke="none">
              {solid.art}
              {solid.drop && <Drop />}
            </g>
          </Cell>
        </button>
      ))}
    </div>
  </div>
);

const EdgeAnalysis = () => (
  <div className="absolute top-[427px] right-6 bottom-0 flex w-[158px] flex-col overflow-hidden rounded-t-[3px] border border-[#4c4c4b] bg-[#2b2b2a] text-[8px] text-[#dededd] shadow-lg shadow-black/60">
    <div className="relative flex h-[9px] shrink-0 items-center justify-center border-b border-[#1e1e1d] bg-[#2f2f2e] text-[#727271]">
      <div className="absolute left-[3px] flex gap-1">
        <button aria-label="Close" className="h-2 w-2 rounded-full bg-[#484847]" />
        <button aria-label="Minimise" className="h-2 w-2 rounded-full bg-[#484847]" />
        <button aria-label="Zoom window" className="h-2 w-2 rounded-full bg-[#484847]" />
      </div>
      Edge Analysis
    </div>
    <div className="grid grid-cols-[52px_1fr] gap-x-1.5 pt-[13px] pr-3.5">
      <span className="text-right leading-3">Show:</span>
      <div className="flex flex-col gap-px">
        <RadioOption group="edges" label="All Edges" />
        <RadioOption group="edges" label="Naked Edges" on />
        <RadioOption group="edges" label="Non-Manifold Edges" />
      </div>
      <label htmlFor="edge-color" className="mt-1.5 self-center text-right leading-3 whitespace-nowrap">Edge color:</label>
      <button id="edge-color" aria-label="Edge color" className="mt-1.5 flex h-4 w-[30px] items-center justify-center border border-[#5a5a59] bg-[#474746]">
        <span className="h-[9px] w-6 border border-[#ddd] bg-[#f056f0]" />
      </button>
      <div className="col-start-2 mt-[5px] flex w-[67px] flex-col gap-1.5">
        <PushButton>Zoom</PushButton>
        <PushButton>Add Objects</PushButton>
        <PushButton>Remove Objects</PushButton>
      </div>
    </div>
    <PushButton className="mt-[15px] mr-[13px] w-7 self-end">Done</PushButton>
  </div>
);

const StatusBar = () => (
  <footer className="flex h-[19px] shrink-0 items-center border-t border-[#161616] bg-[#2f2f2e] pl-[3px] text-[8px] whitespace-nowrap text-[#dededd]">
    <button aria-label="Stop" className="h-2 w-2.5 bg-[#565655]" />
    <span className="ml-px">New target location &lt;12.487,-8.083,-1.264&gt;_Pause</span>
    <div className="ml-auto flex w-[341px] items-center">
      <span className="w-[50px]">Millimeters</span>
      <span className="flex h-[11px] w-[46px] items-center rounded-[3px] border border-[#5d5d5c] px-0.5">
        <TinySelect label="Construction plane" value="CPlane" className="w-9" />
      </span>
      <span className="ml-[9px]">X: 15.091</span>
    </div>
  </footer>
);

export default function App() {
  return (
    <div className="relative flex h-screen w-full flex-col overflow-hidden bg-[#2d2d2c] font-[Roboto,sans-serif] leading-none">
      <MenuBar />
      <TitleBar />
      <ToolTabs />
      <div className="flex min-h-0 flex-1">
        <LeftPanel />
        <Viewport />
        <RightPanel />
      </div>
      <StatusBar />
      <SolidPalette />
      <EdgeAnalysis />
    </div>
  );
}
